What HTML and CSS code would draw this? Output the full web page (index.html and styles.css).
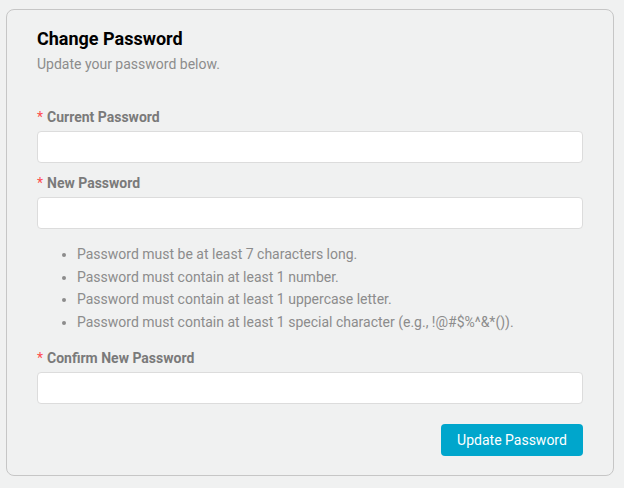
FILE: index.html
```html
<!DOCTYPE html>
<html lang="en">
<head>
<meta charset="utf-8">
<title>Change Password</title>
<link rel="stylesheet" href="styles.css">
</head>
<body>
<div class="card">
  <h1 class="title">Change Password</h1>
  <p class="subtitle">Update your password below.</p>
  <form class="form">
    <div class="field">
      <label class="label"><span class="req">*</span>Current Password</label>
      <input class="input" type="password">
    </div>
    <div class="field">
      <label class="label"><span class="req">*</span>New Password</label>
      <input class="input" type="password">
    </div>
    <ul class="rules">
      <li>Password must be at least 7 characters long.</li>
      <li>Password must contain at least 1 number.</li>
      <li>Password must contain at least 1 uppercase letter.</li>
      <li>Password must contain at least 1 special character (e.g., !@#$%^&amp;*()).</li>
    </ul>
    <div class="field">
      <label class="label"><span class="req">*</span>Confirm New Password</label>
      <input class="input" type="password">
    </div>
    <div class="actions">
      <button class="btn" type="button">Update Password</button>
    </div>
  </form>
</div>
</body>
</html>
```
FILE: styles.css
```css
html, body {
  margin: 0;
  padding: 0;
  background: #f0f1f1;
  font-family: Roboto, "Liberation Sans", Arial, sans-serif;
}
.card {
  box-sizing: border-box;
  width: 608px;
  margin: 9px 0 0 6px;
  border: 1px solid #c6c6c6;
  border-radius: 8px;
  background: #f0f1f1;
  padding: 17px 30px 19px 30px;
}
.title {
  margin: 0;
  font-size: 18px;
  line-height: 24px;
  font-weight: 700;
  color: #000;
}
.subtitle {
  margin: 2px 0 0 0;
  font-size: 14px;
  line-height: 22px;
  color: #8c8c8c;
}
.form {
  margin-top: 32px;
}
.field {
  display: flex;
  flex-direction: column;
  margin-bottom: 10px;
}
.label {
  font-size: 14px;
  line-height: 20px;
  font-weight: 700;
  color: #7a7a7a;
  margin-bottom: 4px;
}
.req {
  color: #ff4d4f;
  margin-right: 4px;
  font-weight: 400;
}
.input {
  box-sizing: border-box;
  height: 32px;
  width: 100%;
  margin: 0;
  border: 1px solid #dcdcdc;
  border-radius: 4px;
  background: #fff;
  outline: none;
}
.rules {
  margin: 14px 0 15px 0;
  padding-left: 40px;
  font-size: 14px;
  line-height: 22.5px;
  color: #8c8c8c;
}
.actions {
  display: flex;
  justify-content: flex-end;
  padding-top: 10px;
}
.btn {
  width: 142px;
  height: 32px;
  border: none;
  border-radius: 4px;
  background: #00a6cc;
  color: #fff;
  font-family: Roboto, "Liberation Sans", Arial, sans-serif;
  font-size: 14px;
  cursor: pointer;
}
```
